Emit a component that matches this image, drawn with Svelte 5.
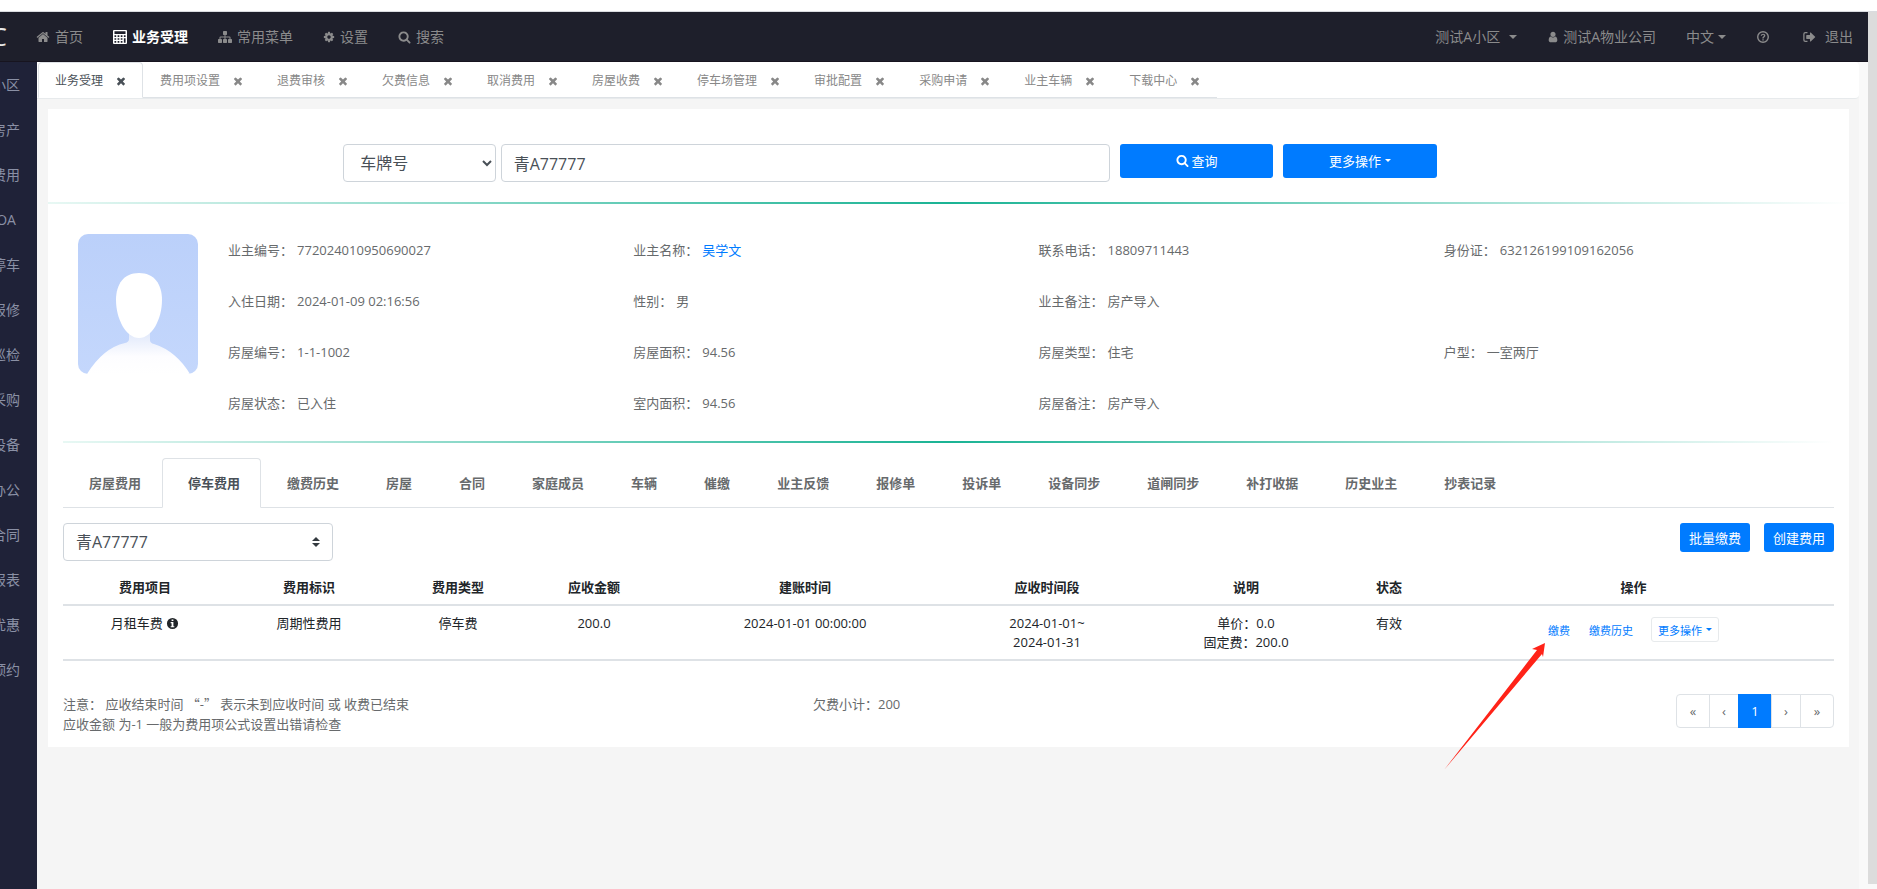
<script>
  const icons = {
    home: 'M1472 992v480q0 26-19 45t-45 19h-384v-384h-256v384h-384q-26 0-45-19t-19-45v-480q0-1 .5-3t.5-3l575-474 575 474q1 2 1 6zm223-69l-62 74q-8 9-21 11h-3q-13 0-21-7l-692-577-692 577q-12 8-24 7-13-2-21-11l-62-74q-8-10-7-23.5t11-21.5l719-599q32-26 76-26t76 26l244 204v-195q0-14 9-23t23-9h192q14 0 23 9t9 23v408l219 182q10 8 11 21.5t-7 23.5z',
    calculator: 'M128 0h1536q128 0 128 128v1536q0 128-128 128h-1536q-128 0-128-128v-1536q0-128 128-128zM190 170v330h1412v-330zM190 680v200h220v-200zM590 680v200h220v-200zM990 680v200h220v-200zM1390 680v200h220v-200zM190 1050v200h220v-200zM590 1050v200h220v-200zM990 1050v200h220v-200zM190 1420v200h220v-200zM590 1420v200h220v-200zM990 1420v200h220v-200zM1390 1050v570h220v-570z',
    sitemap: 'M1792 1248v320q0 40-28 68t-68 28h-320q-40 0-68-28t-28-68v-320q0-40 28-68t68-28h96v-192h-512v192h96q40 0 68 28t28 68v320q0 40-28 68t-68 28h-320q-40 0-68-28t-28-68v-320q0-40 28-68t68-28h96v-192h-512v192h96q40 0 68 28t28 68v320q0 40-28 68t-68 28h-320q-40 0-68-28t-28-68v-320q0-40 28-68t68-28h96v-192q0-52 38-90t90-38h512v-192h-96q-40 0-68-28t-28-68v-320q0-40 28-68t68-28h320q40 0 68 28t28 68v320q0 40-28 68t-68 28h-96v192h512q52 0 90 38t38 90v192h96q40 0 68 28t28 68z',
    cog: 'M1152 896q0-106-75-181t-181-75-181 75-75 181 75 181 181 75 181-75 75-181zm512-109v222q0 12-8 23t-20 13l-185 28q-19 54-39 91 35 50 107 138 10 12 10 25t-9 23q-27 37-99 108t-94 71q-12 0-26-9l-138-108q-44 23-91 38-16 136-29 186-7 28-36 28h-222q-14 0-24.5-8.5t-11.5-21.5l-28-184q-49-16-90-37l-141 107q-10 9-25 9-14 0-25-11-126-114-165-168-7-10-7-23 0-12 8-23 15-21 51-66.5t54-70.5q-27-50-41-99l-183-27q-13-2-21-12.5t-8-23.5v-222q0-12 8-23t19-13l186-28q14-46 39-92-40-57-107-138-10-12-10-24 0-10 9-23 26-36 98.5-107.5t94.5-71.5q13 0 26 10l138 107q44-23 91-38 16-136 29-186 7-28 36-28h222q14 0 24.5 8.5t11.5 21.5l28 184q49 16 90 37l142-107q9-9 24-9 13 0 25 10 129 119 165 170 7 8 7 22 0 12-8 23-15 21-51 66.5t-54 70.5q26 50 41 98l183 28q13 2 21 12.5t8 23.5z',
    search: 'M1216 832q0-185-131.5-316.5t-316.5-131.5-316.5 131.5-131.5 316.5 131.5 316.5 316.5 131.5 316.5-131.5 131.5-316.5zm512 832q0 52-38 90t-90 38q-54 0-90-38l-343-342q-179 124-399 124-143 0-273.5-55.5t-225-150-150-225-55.5-273.5 55.5-273.5 150-225 225-150 273.5-55.5 273.5 55.5 225 150 150 225 55.5 273.5q0 220-124 399l343 343q37 37 37 90z',
    user: 'M1536 1399q0 109-62.5 187t-150.5 78h-854q-88 0-150.5-78t-62.5-187q0-85 8.5-160.5t31.5-152 58.5-131 94-89 134.5-34.5q131 128 313 128t313-128q76 0 134.5 34.5t94 89 58.5 131 31.5 152 8.5 160.5zm-256-887q0 159-112.5 271.5t-271.5 112.5-271.5-112.5-112.5-271.5 112.5-271.5 271.5-112.5 271.5 112.5 112.5 271.5z',
    question: 'M896 128a768 768 0 1 0 0 1536a768 768 0 1 0 0-1536zM896 310a586 586 0 1 1 0 1172a586 586 0 1 1 0-1172zM810 1170h180v180h-180zM590 720q60-250 320-250q280 0 290 240q0 130-130 220q-80 50-80 110v50h-180v-60q0-130 120-210q90-60 90-110q0-90-110-90q-110 0-150 130z',
    signout: 'M700 1536h-280q-260 0-260-260v-760q0-260 260-260h280v170h-270q-110 0-110 110v720q0 110 110 110h270zM1680 850q30 46 0 92l-560 520q-60 40-100-30v-280h-420q-60 0-60-60v-392q0-60 60-60h420v-280q40-70 100-30z',
    times: 'M1490 1322q0 40-28 68l-136 136q-28 28-68 28t-68-28l-294-294-294 294q-28 28-68 28t-68-28l-136-136q-28-28-28-68t28-68l294-294-294-294q-28-28-28-68t28-68l136-136q28-28 68-28t68 28l294 294 294-294q28-28 68-28t68 28l136 136q28 28 28 68t-28 68l-294 294 294 294q28 28 28 68z',
    info: 'M896 128a768 768 0 1 0 0 1536a768 768 0 1 0 0-1536zM770 340h250v200h-250zM640 700h380v560h130v160h-510v-160h130v-400h-130z'
  };

  const menus = [
    { name: '首页', icon: 'home' },
    { name: '业务受理', icon: 'calculator' },
    { name: '常用菜单', icon: 'sitemap' },
    { name: '设置', icon: 'cog' },
    { name: '搜索', icon: 'search' }
  ];
  const catalogs = ['小区', '房产', '费用', 'OA', '停车', '报修', '巡检', '采购', '设备', '办公', '合同', '报表', '优惠', '预约'];
  const pages = ['业务受理', '费用项设置', '退费审核', '欠费信息', '取消费用', '房屋收费', '停车场管理', '审批配置', '采购申请', '业主车辆', '下载中心'];
  const sections = ['房屋费用', '停车费用', '缴费历史', '房屋', '合同', '家庭成员', '车辆', '催缴', '业主反馈', '报修单', '投诉单', '设备同步', '道闸同步', '补打收据', '历史业主', '抄表记录'];

  const owner = [
    ['业主编号', '772024010950690027'],
    ['业主名称', '吴学文', true],
    ['联系电话', '18809711443'],
    ['身份证', '632126199109162056'],
    ['入住日期', '2024-01-09 02:16:56'],
    ['性别', '男'],
    ['业主备注', '房产导入'],
    null,
    ['房屋编号', '1-1-1002'],
    ['房屋面积', '94.56'],
    ['房屋类型', '住宅'],
    ['户型', '一室两厅'],
    ['房屋状态', '已入住'],
    ['室内面积', '94.56'],
    ['房屋备注', '房产导入']
  ];

  // column title and share of the table width
  const columns = [
    ['费用项目', 164],
    ['费用标识', 164],
    ['费用类型', 134],
    ['应收金额', 138],
    ['建账时间', 284],
    ['应收时间段', 200],
    ['说明', 198],
    ['状态', 88],
    ['操作', 401]
  ];
  const total = columns.reduce((sum, c) => sum + c[1], 0);

  let currentMenu = $state('业务受理');
  let currentPage = $state('业务受理');
  let currentSection = $state('停车费用');
  let searchType = $state('车牌号');
  let searchValue = $state('青A77777');
  let car = $state('青A77777');
</script>

{#snippet icon(name)}
  <svg class="icon {name}" viewBox="0 0 1792 1792" aria-hidden="true"><path fill-rule="evenodd" d={icons[name]} /></svg>
{/snippet}

<div class="edge"></div>
<div class="window">
  <div class="app">
    <header class="navbar">
      <div class="logo">C</div>
      <nav class="menus">
        {#each menus as m}
          <a href="#menu" class:active={currentMenu === m.name} onclick={() => (currentMenu = m.name)}>
            {@render icon(m.icon)}<span>{m.name}</span>
          </a>
        {/each}
      </nav>
      <nav class="account">
        <a href="#community">测试A小区<i class="caret far"></i></a>
        <a href="#store">{@render icon('user')}<span>测试A物业公司</span></a>
        <a href="#lang">中文<i class="caret"></i></a>
        <a href="#help" aria-label="帮助">{@render icon('question')}</a>
        <a href="#logout" class="logout">{@render icon('signout')}<span>退出</span></a>
      </nav>
    </header>

    <div class="body">
      <aside class="sidebar">
        <ul>
          {#each catalogs as c}
            <li><a href="#catalog">{c}</a></li>
          {/each}
        </ul>
      </aside>

      <main>
        <div class="page-tabs">
          <ul>
            {#each pages as p}
              <li class:active={currentPage === p}>
                <a href="#page" onclick={() => (currentPage = p)}>{p}</a>
                <button type="button" class="close" aria-label="关闭 {p}">{@render icon('times')}</button>
              </li>
            {/each}
          </ul>
        </div>

        <section class="card">
          <form class="search" onsubmit={(e) => e.preventDefault()}>
            <div class="search-inputs">
              <select class="control" aria-label="查询类型" bind:value={searchType}>
                <option>车牌号</option>
                <option>房屋编号</option>
                <option>业主名称</option>
              </select>
              <input class="control" type="text" aria-label="查询内容" bind:value={searchValue} />
            </div>
            <button type="submit" class="btn large">{@render icon('search')}查询</button>
            <button type="button" class="btn large">更多操作<i class="caret small"></i></button>
          </form>
          <div class="line"></div>

          <div class="owner">
            <svg class="avatar" viewBox="0 0 120 140" role="img" aria-label="业主照片">
              <defs>
                <linearGradient id="sky" x1="0" y1="0" x2="0" y2="1">
                  <stop offset="0" stop-color="#bbd0fa" />
                  <stop offset="1" stop-color="#c4d7fc" />
                </linearGradient>
                <linearGradient id="body" x1="0" y1="0" x2="0" y2="1">
                  <stop offset="0" stop-color="#dde6fa" />
                  <stop offset="0.6" stop-color="#fdfdff" />
                  <stop offset="1" stop-color="#ffffff" />
                </linearGradient>
              </defs>
              <rect width="120" height="140" fill="url(#sky)" />
              <path fill="url(#body)" d="M51 96h21v10q0 3 4 4q22 7 36 30H9q16-26 38-31q4-1 4-4z" />
              <path fill="#fff" d="M61 39c15 0 23 11 23 27 0 19-10 38-23 38s-23-19-23-38c0-16 8-27 23-27z" />
            </svg>
            <dl>
              {#each owner as item}
                <div>
                  {#if item}
                    <dt>{item[0]}：</dt>
                    <dd>{#if item[2]}<a href="#owner">{item[1]}</a>{:else}{item[1]}{/if}</dd>
                  {/if}
                </div>
              {/each}
            </dl>
          </div>

          <div class="detail">
            <div class="line"></div>
            <ul class="sections">
              {#each sections as s}
                <li><a href="#section" class:active={currentSection === s} onclick={() => (currentSection = s)}>{s}</a></li>
              {/each}
            </ul>

            <div class="toolbar">
              <select class="control custom" aria-label="车辆" bind:value={car}>
                <option>青A77777</option>
              </select>
              <div class="buttons">
                <button type="button" class="btn">批量缴费</button>
                <button type="button" class="btn">创建费用</button>
              </div>
            </div>

            <table>
              <colgroup>
                {#each columns as c}
                  <col style="width: {(c[1] / total) * 100}%" />
                {/each}
              </colgroup>
              <thead>
                <tr>
                  {#each columns as c}
                    <th>{c[0]}</th>
                  {/each}
                </tr>
              </thead>
              <tbody>
                <tr>
                  <td>月租车费 {@render icon('info')}</td>
                  <td>周期性费用</td>
                  <td>停车费</td>
                  <td>200.0</td>
                  <td>2024-01-01 00:00:00</td>
                  <td>2024-01-01~<br />2024-01-31</td>
                  <td>单价：0.0<br />固定费：200.0</td>
                  <td>有效</td>
                  <td>
                    <div class="actions">
                      <div class="pay">
                        <button type="button">缴费</button>
                        <svg class="pointer" viewBox="0 0 102 128" aria-hidden="true">
                          <path fill="#ff2318" d="M101 0L88 6l5 1L0 127 98 11l1 3z" />
                        </svg>
                      </div>
                      <button type="button">缴费历史</button>
                      <button type="button" class="more">更多操作<i class="caret small"></i></button>
                    </div>
                  </td>
                </tr>
              </tbody>
            </table>

            <footer>
              <p>注意： 应收结束时间 <span class="quote">“</span>-<span class="quote">”</span> 表示未到应收时间 或 收费已结束<br />应收金额 为-1 一般为费用项公式设置出错请检查</p>
              <p>欠费小计：200</p>
              <nav class="pagination" aria-label="分页">
                <button type="button">«</button>
                <button type="button" class="narrow">‹</button>
                <button type="button" class="current">1</button>
                <button type="button" class="narrow">›</button>
                <button type="button">»</button>
              </nav>
            </footer>
          </div>
        </section>
      </main>
    </div>
  </div>
  <div class="scrollbar"></div>
</div>

<style>
  :global(body) {
    background: #fff;
    color: #676a6c;
    font-family: "Open Sans", "Noto Sans CJK SC", sans-serif;
    font-size: 13px;
    line-height: 20px;
  }

  :global(#app) {
    display: flex;
    flex-direction: column;
    min-height: 100vh;
  }

  ul, dl, dd, p {
    list-style: none;
    margin: 0;
    padding: 0;
  }

  a {
    color: inherit;
    text-decoration: none;
  }

  button, input, select {
    box-sizing: border-box;
    font-family: inherit;
    margin: 0;
  }

  button {
    cursor: pointer;
  }

  .icon {
    fill: currentColor;
    flex: none;
    height: 14px;
    overflow: visible;
    width: 14px;
  }

  .caret {
    border: 4px solid transparent;
    border-bottom: 0;
    border-top-color: currentColor;
    display: inline-block;
    margin-left: 4px;
  }

  .caret.small {
    border-width: 3px;
    border-bottom: 0;
  }

  .edge {
    border-bottom: 1px solid #dadce0;
    height: 11px;
  }

  .window {
    background: #f9f9f9;
    display: flex;
    flex: 1;
  }

  .scrollbar {
    background: #dcdcdc;
    margin-bottom: 5px;
    width: 9px;
  }

  .app {
    display: flex;
    flex: 1;
    flex-direction: column;
    min-width: 0;
  }

  .navbar {
    align-items: center;
    background: #1e1f2b;
    border-bottom: 1px solid #17141f;
    color: #8b8b8c;
    display: flex;
    font-size: 14px;
    height: 49px;
  }

  .logo {
    color: #e8e8e8;
    direction: rtl;
    font-size: 26px;
    line-height: 49px;
    overflow: hidden;
    width: 7px;
  }

  .menus, .account {
    display: flex;
  }

  .menus {
    margin-left: 14px;
  }

  .menus a, .account a {
    align-items: center;
    display: flex;
    gap: 5px;
    padding: 0 15px;
  }

  .menus .active {
    color: #fff;
    font-weight: 600;
  }

  .navbar .cog, .navbar .user {
    width: 12px;
  }

  .navbar .search {
    width: 13px;
  }

  .account {
    margin-left: auto;
  }

  .account a {
    gap: 4px;
  }

  .account .caret {
    margin-left: 0;
  }

  .account .far {
    margin-left: 5px;
  }

  .account .logout {
    gap: 9px;
    padding: 0 15px 0 17px;
  }

  .body {
    display: flex;
    flex: 1;
  }

  .sidebar {
    background: #1f2238;
    color: #8a90a5;
    font-size: 14px;
    overflow: hidden;
    width: 37px;
  }

  /* the labels run off the left edge of the rail */
  .sidebar ul {
    margin-left: -25px;
  }

  .sidebar li {
    line-height: 45px;
    text-align: center;
  }

  main {
    background: #f5f5f5;
    flex: 1;
    margin-right: 9px;
    min-width: 0;
  }

  .page-tabs {
    background: #fff;
    border-bottom: 1px solid #e7eaec;
    border-radius: 0 4px 4px 0;
    display: flex;
    padding-left: 1px;
  }

  .page-tabs ul {
    border-bottom: 1px solid #dee2e6;
    display: flex;
  }

  .page-tabs li {
    align-items: center;
    border: 1px solid transparent;
    border-radius: 4px 4px 0 0;
    color: #888;
    display: flex;
    font-size: 12px;
    gap: 12px;
    height: 32px;
    margin-bottom: -1px;
    padding: 2px 15px 0 16px;
  }

  .page-tabs .active {
    background: #fff;
    border-color: #dee2e6 #dee2e6 #fff;
    color: #495057;
  }

  .close {
    background: none;
    border: 0;
    color: inherit;
    display: flex;
    padding: 0;
  }

  .close .icon {
    height: 12px;
    width: 12px;
  }

  .card {
    background: #fff;
    margin: 10px 10px 0 11px;
    padding: 35px 0 13px;
  }

  form.search {
    align-items: start;
    display: grid;
    gap: 10px;
    grid-template-columns: 5fr 1fr 1fr;
    margin-bottom: 20px;
    padding: 0 22.9% 0 16.4%;
  }

  .search-inputs {
    display: grid;
    gap: 5px;
    grid-template-columns: 1fr 4fr;
  }

  .control {
    background-color: #fff;
    border: 1px solid #ced4da;
    border-radius: 4px;
    color: #495057;
    font-size: 16px;
    height: 38px;
    min-width: 0;
    padding: 0 12px;
    width: 100%;
  }

  .search select {
    padding-right: 0;
  }

  .custom {
    appearance: none;
    background-image: url("data:image/svg+xml,%3Csvg xmlns='http://www.w3.org/2000/svg' viewBox='0 0 4 5'%3E%3Cpath fill='%23343a40' d='M2 0L0 2h4zm0 5L0 3h4z'/%3E%3C/svg%3E");
    background-position: right 12px center;
    background-repeat: no-repeat;
    background-size: 8px 10px;
    width: 270px;
  }

  .btn {
    align-items: center;
    background: #007bff;
    border: 0;
    border-radius: 3px;
    color: #fff;
    display: flex;
    font-size: 13px;
    height: 29px;
    justify-content: center;
    padding: 0 9px;
  }

  .btn.large {
    height: 34px;
    padding-bottom: 2px;
  }

  .btn .icon {
    height: 13px;
    margin-right: 3px;
    width: 13px;
  }

  .line {
    background: linear-gradient(to right, #e8f8f4, #1ab394 50%, #fff);
    height: 2px;
  }

  .owner {
    display: flex;
    gap: 30px;
    padding: 30px 0 28px 30px;
  }

  .avatar {
    border-radius: 10px;
    flex: none;
    height: 140px;
    width: 120px;
  }

  dl {
    display: grid;
    flex: 1;
    grid-auto-rows: 20px;
    grid-template-columns: repeat(4, 1fr);
    margin-top: 6px;
    row-gap: 31px;
  }

  dl div {
    display: flex;
    gap: 4px;
  }

  dd a {
    color: #007bff;
  }

  .detail {
    padding: 0 15px;
  }

  .sections {
    border-bottom: 1px solid #dee2e6;
    display: flex;
    margin-top: 15px;
  }

  .sections a {
    border: 1px solid transparent;
    border-radius: 4px 4px 0 0;
    display: block;
    font-weight: 600;
    line-height: 48px;
    margin-bottom: -1px;
    padding: 0 20px 0 25px;
  }

  .sections .active {
    background: #fff;
    border-color: #dee2e6 #dee2e6 #fff;
    color: #495057;
  }

  .toolbar {
    display: flex;
    justify-content: space-between;
    margin: 15px 0 9px;
  }

  .buttons {
    display: flex;
    gap: 14px;
  }

  table {
    border-collapse: collapse;
    color: #212529;
    line-height: 19px;
    table-layout: fixed;
    width: 100%;
  }

  th, td {
    border-bottom: 2px solid #dee2e6;
    padding: 8px 0 7px;
    text-align: center;
    vertical-align: top;
  }

  th {
    font-weight: 600;
  }

  td .icon {
    height: 13px;
    vertical-align: -2px;
    width: 13px;
  }

  .actions {
    align-items: center;
    color: #007bff;
    display: flex;
    height: 31px;
    justify-content: center;
    padding-right: 7px;
  }

  .actions button {
    background: none;
    border: 1px solid transparent;
    border-radius: 3px;
    color: inherit;
    font-size: 11px;
    height: 25px;
    margin-right: 5px;
    padding: 0 6px;
  }

  .actions .more {
    align-items: center;
    border-color: #e7eaec;
    display: flex;
    margin: 0 0 0 6px;
  }

  .pay {
    position: relative;
  }

  .pointer {
    height: 128px;
    position: absolute;
    right: 36px;
    top: 26px;
    width: 102px;
  }

  footer {
    display: grid;
    grid-template-columns: 750fr 450fr 571fr;
    margin-top: 33px;
  }

  /* curly quotes take a full character cell */
  .quote {
    font-family: "Noto Sans CJK SC", sans-serif;
  }

  .pagination {
    display: flex;
    justify-self: end;
  }

  .pagination button {
    background: #fff;
    border: 1px solid #dee2e6;
    color: #676a6c;
    font-size: 13px;
    height: 34px;
    margin-left: -1px;
    padding: 0;
    width: 34px;
  }

  .pagination .narrow {
    width: 30px;
  }

  .pagination button:first-child {
    border-radius: 4px 0 0 4px;
  }

  .pagination button:last-child {
    border-radius: 0 4px 4px 0;
  }

  .pagination .current {
    background: #007bff;
    border-color: #007bff;
    color: #fff;
  }
</style>
